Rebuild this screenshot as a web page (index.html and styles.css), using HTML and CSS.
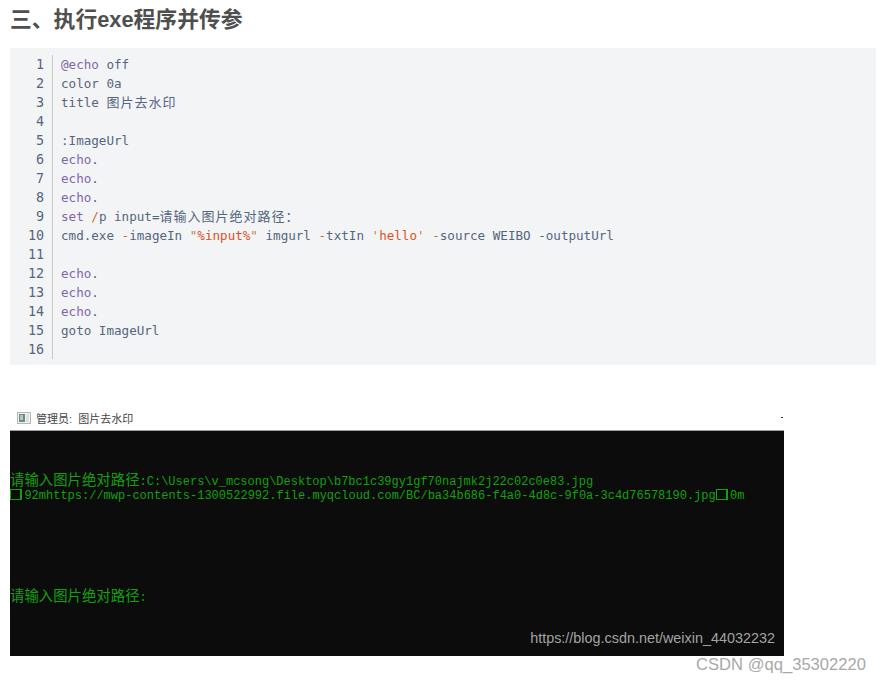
FILE: index.html
```html
<!DOCTYPE html>
<html lang="zh-CN">
<head>
<meta charset="utf-8">
<title>三、执行exe程序并传参</title>
<link rel="stylesheet" href="styles.css">
</head>
<body>
<h3 class="heading">三、执行exe程序并传参</h3>
<div class="code">
<div class="gutter"><div>1</div><div>2</div><div>3</div><div>4</div><div>5</div><div>6</div><div>7</div><div>8</div><div>9</div><div>10</div><div>11</div><div>12</div><div>13</div><div>14</div><div>15</div><div>16</div></div>
<div class="lines">
<div class="line"><span class="kw">@echo</span> off</div>
<div class="line">color 0a</div>
<div class="line">title <span class="cjk">图片去水印</span></div>
<div class="line"></div>
<div class="line">:ImageUrl</div>
<div class="line"><span class="kw">echo</span>.</div>
<div class="line"><span class="kw">echo</span>.</div>
<div class="line"><span class="kw">echo</span>.</div>
<div class="line"><span class="kw">set</span> <span class="op">/</span>p input=<span class="cjk">请输入图片绝对路径：</span></div>
<div class="line">cmd.exe <span class="op">-</span>imageIn <span class="str">"<span class="var">%input%</span>"</span> imgurl <span class="op">-</span>txtIn <span class="str">'<span class="var">hello</span>'</span> <span class="op">-</span>source WEIBO -outputUrl</div>
<div class="line"></div>
<div class="line"><span class="kw">echo</span>.</div>
<div class="line"><span class="kw">echo</span>.</div>
<div class="line"><span class="kw">echo</span>.</div>
<div class="line">goto ImageUrl</div>
<div class="line"></div>
</div>
</div>
<figure class="shot">
<div class="titlebar">
<div class="title">
<svg class="app-icon" width="14" height="12" viewBox="0 0 14 12"><rect x="0.5" y="0.5" width="13" height="11" fill="#f1f3f3" stroke="#b4b8b8"/><rect x="2" y="2" width="6" height="8" fill="#6f8a86"/><rect x="3" y="3" width="3" height="5" fill="#b3c7c2"/><rect x="9" y="2" width="3" height="8" fill="#dde0e0"/></svg>
<span>管理员:&nbsp; 图片去水印</span>
</div>
<span class="dash"></span>
</div>
<div class="terminal">
<div class="term-line"><span class="term-cjk">请输入图片绝对路径</span>:C:\Users\v_mcsong\Desktop\b7bc1c39gy1gf70najmk2j22c02c0e83.jpg</div>
<div class="term-line"><span class="box"></span>92mhttps://mwp-contents-1300522992.file.myqcloud.com/BC/ba34b686-f4a0-4d8c-9f0a-3c4d76578190.jpg<span class="box"></span>0m</div>
<div class="term-line prompt"><span class="term-cjk">请输入图片绝对路径</span>:</div>
<span class="url-mark">https://blog.csdn.net/weixin_44032232</span>
</div>
</figure>
<div class="csdn">CSDN @qq_35302220</div>
</body>
</html>
```
FILE: styles.css
```css
html, body { margin: 0; padding: 0; background: #fff; }
body { width: 881px; height: 682px; overflow: hidden; font-family: "Liberation Sans", "Noto Sans CJK SC", sans-serif; }
.heading { margin: 0; padding: 5px 0 0 10px; height: 48px; box-sizing: border-box; font-size: 21.8px; line-height: 30px; font-weight: 700; color: #4f4f4f; }
.code { display: flex; margin: 0 5px 0 10px; padding: 7px 0 6px; background: #f3f4f6; font-family: "DejaVu Sans Mono", "Noto Sans CJK SC", monospace; font-size: 12.58px; line-height: 19px; color: #566580; }
.gutter { width: 43px; box-sizing: border-box; padding-right: 8px; border-right: 1px solid #c6c8cb; text-align: right; font-size: 13.4px; color: #566580; }
.lines { padding-left: 8px; }
.line { height: 19px; white-space: pre; }
.kw { color: #7f68a8; }
.op { color: #d9662b; }
.str { color: #c9803a; }
.var { color: #d9531e; }
.cjk { font-size: 13px; letter-spacing: 1px; }
.shot { margin: 40px 0 0 10px; width: 774px; }
.titlebar { display: flex; justify-content: space-between; align-items: center; height: 26px; box-sizing: border-box; border-bottom: 1px solid #a0a0a0; }
.title { display: flex; align-items: center; gap: 5px; padding-left: 7px; font-size: 11px; color: #444; }
.app-icon { display: block; }
.dash { width: 2px; height: 1px; margin-right: 1px; background: #333; }
.terminal { position: relative; height: 225px; box-sizing: border-box; padding-top: 43px; background: #0c0c0c; color: #13a10e; font-family: "Liberation Mono", "Noto Sans CJK SC", monospace; font-size: 12px; line-height: 15px; }
.term-line { white-space: pre; height: 15px; }
.term-cjk { font-size: 14.4px; }
.box { display: inline-block; width: 12px; height: 11px; margin-right: 2.4px; border: 1px solid #13a10e; border-right-width: 2px; box-sizing: border-box; vertical-align: -1px; }
.prompt { margin-top: 86px; }
.url-mark { position: absolute; right: 9px; bottom: 9px; font-size: 14.4px; line-height: 17px; color: #a3a3a3; font-family: "Liberation Sans", sans-serif; }
.csdn { padding-right: 15px; text-align: right; font-size: 16.6px; line-height: 18px; color: #a8a8a8; }
```
